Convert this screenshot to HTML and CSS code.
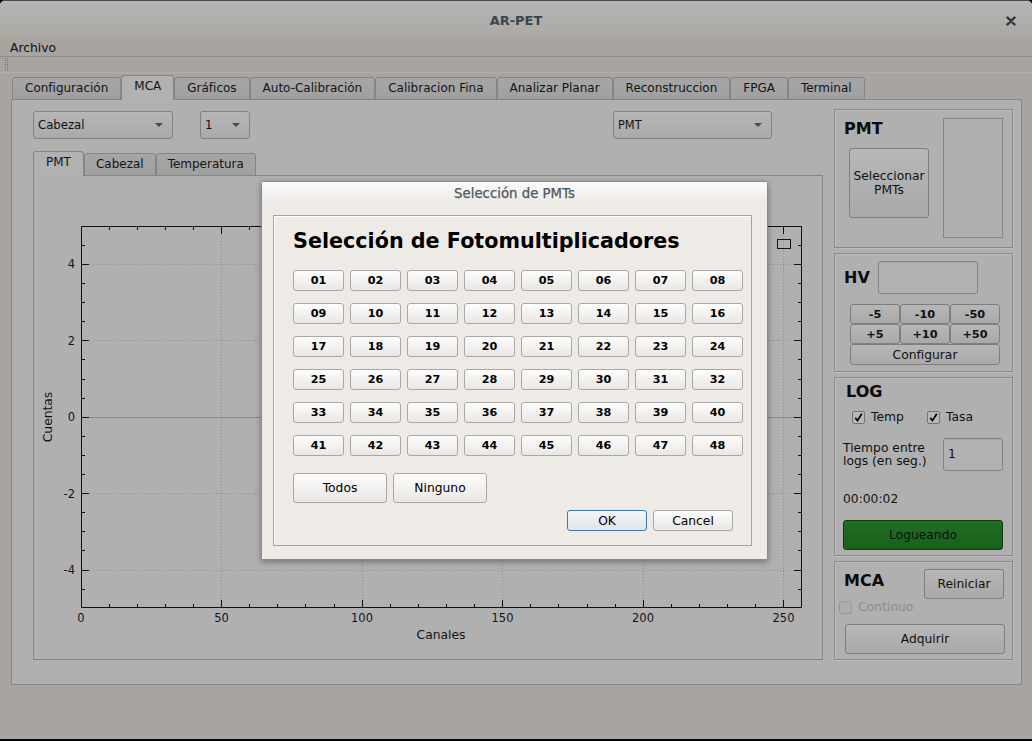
FILE: index.html
```html
<!DOCTYPE html>
<html lang="es">
<head>
<meta charset="utf-8">
<title>AR-PET</title>
<link rel="stylesheet" href="styles.css">
</head>
<body>
<div class="window">
  <header class="titlebar">
    <span></span>
    <span class="title">AR-PET</span>
    <svg class="close" width="10" height="10" viewBox="0 0 10 10"><path d="M1.5 1.5 L8.5 8.5 M8.5 1.5 L1.5 8.5" stroke="#2f3436" stroke-width="2.4" stroke-linecap="round"/></svg>
  </header>
  <nav class="menubar"><span>Archivo</span></nav>
  <div class="toolbar"><span class="grip"></span></div>
  <main class="central">
    <div class="tabbar">
      <div class="tab">Configuración</div>
      <div class="tab active">MCA</div>
      <div class="tab">Gráficos</div>
      <div class="tab">Auto-Calibración</div>
      <div class="tab">Calibracion Fina</div>
      <div class="tab">Analizar Planar</div>
      <div class="tab">Reconstruccion</div>
      <div class="tab">FPGA</div>
      <div class="tab">Terminal</div>
    </div>
    <div class="tabpane">
      <section class="leftcol">
        <div class="combos">
          <div class="combo c-cabezal"><span>Cabezal</span><i class="arrow"></i></div>
          <div class="combo c-num"><span>1</span><i class="arrow"></i></div>
          <div class="combo c-pmt"><span>PMT</span><i class="arrow"></i></div>
        </div>
        <div class="tabbar subtabs">
          <div class="tab active">PMT</div>
          <div class="tab">Cabezal</div>
          <div class="tab">Temperatura</div>
        </div>
        <div class="subpane">
          <svg class="plot" width="788" height="483" viewBox="0 0 788 483">
            <g stroke="#8e8e8e" stroke-width="1" stroke-dasharray="1 2" shape-rendering="crispEdges">
              <path d="M47 88.5H768 M47 164.5H768 M47 317.5H768 M47 394.5H768"/>
              <path d="M187.5 50V432 M328.5 50V432 M468.5 50V432 M609.5 50V432 M749.5 50V432"/>
            </g>
            <path d="M47 241.5H768" stroke="#8a8a8a" stroke-width="1" shape-rendering="crispEdges"/>
            <g stroke="#111" stroke-width="1" fill="none" shape-rendering="crispEdges">
              <rect x="47.5" y="50.5" width="720" height="381"/>
              <path d="M47.5 432V424 M75.5 432V428 M103.5 432V428 M131.5 432V428 M159.5 432V428 M187.5 432V424 M215.5 432V428 M243.5 432V428 M271.5 432V428 M300.5 432V428 M328.5 432V424 M356.5 432V428 M384.5 432V428 M412.5 432V428 M440.5 432V428 M468.5 432V424 M496.5 432V428 M524.5 432V428 M553.5 432V428 M581.5 432V428 M609.5 432V424 M637.5 432V428 M665.5 432V428 M693.5 432V428 M721.5 432V428 M749.5 432V424"/>
              <path d="M47.5 50V58 M75.5 50V54 M103.5 50V54 M131.5 50V54 M159.5 50V54 M187.5 50V58 M215.5 50V54 M243.5 50V54 M271.5 50V54 M300.5 50V54 M328.5 50V58 M356.5 50V54 M384.5 50V54 M412.5 50V54 M440.5 50V54 M468.5 50V58 M496.5 50V54 M524.5 50V54 M553.5 50V54 M581.5 50V54 M609.5 50V58 M637.5 50V54 M665.5 50V54 M693.5 50V54 M721.5 50V54 M749.5 50V58"/>
              <path d="M47 69.5H51 M47 88.5H55 M47 107.5H51 M47 126.5H51 M47 145.5H51 M47 164.5H55 M47 183.5H51 M47 203.5H51 M47 222.5H51 M47 241.5H55 M47 260.5H51 M47 279.5H51 M47 298.5H51 M47 317.5H55 M47 336.5H51 M47 355.5H51 M47 374.5H51 M47 394.5H55 M47 413.5H51"/>
              <path d="M768 69.5H764 M768 88.5H760 M768 107.5H764 M768 126.5H764 M768 145.5H764 M768 164.5H760 M768 183.5H764 M768 203.5H764 M768 222.5H764 M768 241.5H760 M768 260.5H764 M768 279.5H764 M768 298.5H764 M768 317.5H760 M768 336.5H764 M768 355.5H764 M768 374.5H764 M768 394.5H760 M768 413.5H764"/>
              <rect x="743.5" y="63.5" width="13" height="9"/>
            </g>
            <g class="ticklabel" text-anchor="end">
              <text x="41" y="92">4</text>
              <text x="41" y="168.5">2</text>
              <text x="41" y="245">0</text>
              <text x="41" y="321.5">-2</text>
              <text x="41" y="398">-4</text>
            </g>
            <g class="ticklabel" text-anchor="middle">
              <text x="47" y="445.5">0</text>
              <text x="187.5" y="445.5">50</text>
              <text x="328" y="445.5">100</text>
              <text x="468.5" y="445.5">150</text>
              <text x="609" y="445.5">200</text>
              <text x="749.5" y="445.5">250</text>
            </g>
            <text class="axistitle" x="407" y="462.5" text-anchor="middle">Canales</text>
            <text class="axistitle" transform="translate(17.5 241) rotate(-90)" text-anchor="middle">Cuentas</text>
          </svg>
        </div>
      </section>
      <aside class="rightcol">
        <div class="group g-pmt">
          <div class="pmt-left">
            <div class="gtitle">PMT</div>
            <div class="btn sel-btn">Seleccionar<br>PMTs</div>
          </div>
          <div class="pmt-box"></div>
        </div>
        <div class="group g-hv">
          <div class="hv-row">
            <div class="gtitle hv-title">HV</div>
            <div class="field hv-field"></div>
          </div>
          <div class="hv-grid">
            <div class="btn hvb">-5</div>
            <div class="btn hvb">-10</div>
            <div class="btn hvb">-50</div>
            <div class="btn hvb">+5</div>
            <div class="btn hvb">+10</div>
            <div class="btn hvb">+50</div>
            <div class="btn hv-conf">Configurar</div>
          </div>
        </div>
        <div class="group g-log">
          <div class="gtitle log-title">LOG</div>
          <div class="cb-row">
            <label class="cb cb-temp"><span class="box"><svg width="9" height="9" viewBox="0 0 9 9"><path d="M1.3 4.8 L3.4 7.6 L7.8 0.8" fill="none" stroke="#000" stroke-width="1.7"/></svg></span>Temp</label>
            <label class="cb"><span class="box"><svg width="9" height="9" viewBox="0 0 9 9"><path d="M1.3 4.8 L3.4 7.6 L7.8 0.8" fill="none" stroke="#000" stroke-width="1.7"/></svg></span>Tasa</label>
          </div>
          <div class="time-row">
            <div class="time-label">Tiempo entre<br>logs (en seg.)</div>
            <div class="field time-field">1</div>
          </div>
          <div class="clock">00:00:02</div>
          <div class="btn green">Logueando</div>
        </div>
        <div class="group g-mca">
          <div class="mca-row">
            <div class="gtitle mca-title">MCA</div>
            <div class="btn reini">Reiniciar</div>
          </div>
          <label class="cb disabled"><span class="box"></span>Continuo</label>
          <div class="btn adq">Adquirir</div>
        </div>
      </aside>
    </div>
  </main>
</div>

<div class="dialog">
  <div class="dtitle">Selección de PMTs</div>
  <div class="dbody">
    <div class="dframe">
      <h1 class="dhead">Selección de Fotomultiplicadores</h1>
      <div class="pmtgrid">
        <div class="dbtn num">01</div><div class="dbtn num">02</div><div class="dbtn num">03</div><div class="dbtn num">04</div><div class="dbtn num">05</div><div class="dbtn num">06</div><div class="dbtn num">07</div><div class="dbtn num">08</div>
        <div class="dbtn num">09</div><div class="dbtn num">10</div><div class="dbtn num">11</div><div class="dbtn num">12</div><div class="dbtn num">13</div><div class="dbtn num">14</div><div class="dbtn num">15</div><div class="dbtn num">16</div>
        <div class="dbtn num">17</div><div class="dbtn num">18</div><div class="dbtn num">19</div><div class="dbtn num">20</div><div class="dbtn num">21</div><div class="dbtn num">22</div><div class="dbtn num">23</div><div class="dbtn num">24</div>
        <div class="dbtn num">25</div><div class="dbtn num">26</div><div class="dbtn num">27</div><div class="dbtn num">28</div><div class="dbtn num">29</div><div class="dbtn num">30</div><div class="dbtn num">31</div><div class="dbtn num">32</div>
        <div class="dbtn num">33</div><div class="dbtn num">34</div><div class="dbtn num">35</div><div class="dbtn num">36</div><div class="dbtn num">37</div><div class="dbtn num">38</div><div class="dbtn num">39</div><div class="dbtn num">40</div>
        <div class="dbtn num">41</div><div class="dbtn num">42</div><div class="dbtn num">43</div><div class="dbtn num">44</div><div class="dbtn num">45</div><div class="dbtn num">46</div><div class="dbtn num">47</div><div class="dbtn num">48</div>
      </div>
      <div class="allnone">
        <div class="dbtn big">Todos</div>
        <div class="dbtn big">Ninguno</div>
      </div>
      <div class="okrow">
        <div class="dbtn act ok">OK</div>
        <div class="dbtn act">Cancel</div>
      </div>
    </div>
  </div>
</div>
</body>
</html>
```

FILE: styles.css
```css
* { box-sizing: border-box; }
html, body { margin: 0; padding: 0; }
body {
  width: 1032px;
  height: 741px;
  background: #000;
  font-family: "DejaVu Sans", "Noto Sans", sans-serif;
  font-size: 12px;
  color: #111;
  overflow: hidden;
  position: relative;
}

.window {
  height: 739px;
  background: #a8a4a0;
  border-radius: 5px 5px 0 0;
  border-top: 1px solid #4c4c4c;
  display: flex;
  flex-direction: column;
  overflow: hidden;
}

/* title bar */
.titlebar {
  height: 37px;
  flex: none;
  display: grid;
  grid-template-columns: 1fr auto 1fr;
  align-items: center;
  background: linear-gradient(#b5b5b5, #aba8a4);
  padding-top: 2px;
}
.title {
  font-weight: bold;
  font-size: 13px;
  color: #3c454d;
}
.close { justify-self: end; margin-right: 16px; }

.menubar {
  height: 19px;
  flex: none;
  line-height: 18px;
  padding: 1px 0 0 10px;
  font-size: 12.3px;
  border-bottom: 1px solid #918e8b;
}
.toolbar {
  height: 16px;
  flex: none;
  border-bottom: 1px solid #b0adaa;
  padding: 1px 0 0 5px;
}
.grip {
  display: block;
  width: 3px;
  height: 13px;
  border-left: 1px dotted #7c7a78;
  border-right: 1px dotted #7c7a78;
}

/* central area */
.central {
  flex: none;
  padding: 2px 10px 0 11px;
}

.tabbar {
  display: flex;
  align-items: flex-end;
  height: 25px;
  position: relative;
  z-index: 1;
  margin-bottom: -1px;
  padding-left: 1px;
}
.tab {
  height: 23px;
  line-height: 21px;
  padding: 0 12px;
  border: 1px solid #858585;
  border-radius: 3px 3px 0 0;
  background: linear-gradient(#a6a6a6, #a0a0a0);
  color: #141414;
  white-space: nowrap;
}
.tab.active {
  height: 25px;
  line-height: 21px;
  border-bottom: none;
  background: #b1b1b1;
  padding-bottom: 2px;
}

.tabpane {
  width: 1011px;
  height: 586px;
  border: 1px solid #878787;
  background: #b0b0b0;
  display: flex;
  gap: 11px;
  padding: 9px 8px 0 21px;
}

/* left column */
.leftcol {
  width: 790px;
  margin-top: 2px;
  display: flex;
  flex-direction: column;
}
.combos {
  display: flex;
  height: 28px;
  margin-bottom: 12px;
}
.combo {
  height: 28px;
  border: 1px solid #838383;
  border-radius: 3px;
  background: linear-gradient(#b6b6b6, #aaaaaa);
  display: flex;
  align-items: center;
  justify-content: space-between;
  padding: 0 9px 0 4px;
  font-size: 11.7px;
}
.c-cabezal { width: 140px; }
.c-num { width: 50px; margin-left: 27px; }
.c-pmt { width: 159px; margin-left: 363px; font-size: 11.4px; }
.arrow {
  width: 0; height: 0;
  border-left: 4px solid transparent;
  border-right: 4px solid transparent;
  border-top: 4px solid #4a4a4a;
}
.subtabs { padding-left: 0; }
.subtabs .tab { padding: 0 11px; }
.subtabs .tab.active { padding: 0 12px 2px; }

.subpane {
  height: 485px;
  border: 1px solid #878787;
  background: #b0b0b0;
}
.plot { display: block; }
.ticklabel text { font-family: "DejaVu Sans", sans-serif; font-size: 11.5px; fill: #141414; }
.axistitle { font-family: "DejaVu Sans", sans-serif; font-size: 12.3px; fill: #141414; }

/* right column */
.rightcol {
  width: 179px;
  display: flex;
  flex-direction: column;
  gap: 5px;
}
.group {
  border: 1px solid #8a8a8a;
  box-shadow: inset 1px 1px 0 #bcbcbc, 1px 1px 0 #bcbcbc;
}
.gtitle {
  font-weight: bold;
  font-size: 16px;
  line-height: 22px;
  color: #0c0c0c;
}
.btn {
  border: 1px solid #7f7f7f;
  border-radius: 3px;
  background: linear-gradient(#b7b7b7, #a9a9a9);
  display: flex;
  align-items: center;
  justify-content: center;
  text-align: center;
  color: #111;
  font-size: 12.3px;
}

.g-pmt {
  height: 139px;
  display: flex;
  justify-content: space-between;
  padding: 8px 9px 9px 9px;
}
.sel-btn {
  width: 80px;
  height: 70px;
  margin: 8px 0 0 5px;
  line-height: 14px;
}
.pmt-box {
  width: 60px;
  height: 120px;
  border: 1px solid #868686;
  background: #b0b0b0;
}

.g-hv {
  height: 119px;
  padding: 7px 9px 0 9px;
}
.hv-row { display: flex; align-items: center; }
.hv-title { width: 34px; padding-top: 1px; }
.field {
  border: 1px solid #828282;
  border-radius: 3px;
  background: #b2b2b2;
  box-shadow: inset 0 1px 0 #a9a9a9;
}
.hv-field { width: 100px; height: 33px; }
.hv-grid {
  display: grid;
  grid-template-columns: 50px 50px 50px;
  grid-template-rows: 20px 20px 21px;
  margin: 10px 0 0 6px;
  width: 151px;
}
.hvb { font-weight: bold; font-size: 11.3px; }
.hv-conf { grid-column: 1 / 4; }

.g-log {
  height: 179px;
  padding: 3px 9px 0 8px;
  display: flex;
  flex-direction: column;
  font-size: 12.3px;
}
.log-title { margin-left: 3px; }
.cb-row { display: flex; margin: 6px 0 0 9px; height: 16px; }
.cb {
  display: flex;
  align-items: center;
  gap: 6px;
  line-height: 16px;
  font-size: 12.3px;
}
.cb-temp { width: 75px; }
.cb .box {
  width: 13px;
  height: 13px;
  border: 1px solid #747474;
  border-radius: 2px;
  background: #b9b9b9;
  display: flex;
  align-items: center;
  justify-content: center;
}
.time-row {
  display: flex;
  align-items: center;
  margin-top: 13px;
}
.time-label { width: 100px; line-height: 13px; }
.time-field {
  width: 60px;
  height: 33px;
  line-height: 31px;
  padding-left: 4px;
}
.clock { margin-top: 20px; line-height: 16px; }
.green {
  margin-top: 13px;
  width: 160px;
  height: 30px;
  background: linear-gradient(#1f6e23, #19611c);
  border-color: #0e3a10;
  color: #0b120b;
}

.g-mca {
  height: 99px;
  padding: 7px 8px 0 9px;
  display: flex;
  flex-direction: column;
}
.mca-row { display: flex; justify-content: space-between; align-items: flex-start; }
.mca-title { margin-top: 1px; }
.reini { width: 80px; height: 30px; }
.cb.disabled { margin-left: -5px; color: #8c8c8c; height: 16px; }
.cb.disabled .box { border-color: #999; background: #adadad; }
.adq { margin: 9px 0 0 1px; width: 160px; height: 30px; }

/* dialog */
.dialog {
  position: absolute;
  left: 261px;
  top: 181px;
  width: 507px;
  height: 379px;
  background: #eeebe7;
  border: 1px solid #8a8a8a;
  border-radius: 3px 3px 0 0;
  box-shadow: 0 2px 6px rgba(0,0,0,0.35);
}
.dtitle {
  height: 24px;
  line-height: 24px;
  text-align: center;
  font-size: 13.3px;
  color: #4d5861;
  background: linear-gradient(#fbfbfb, #ebe8e4);
  -webkit-text-stroke: 0.25px #4d5861;
}
.dbody { padding: 9px 15px 0 11px; }
.dframe {
  height: 331px;
  border: 1px solid #a6a4a0;
  box-shadow: inset 1px 1px 0 #ffffff;
  padding: 12px 18px 0 19px;
}
.dhead {
  margin: 0;
  font-size: 20.7px;
  line-height: 26px;
  font-weight: bold;
  color: #000;
}
.pmtgrid {
  margin-top: 16px;
  display: grid;
  grid-template-columns: repeat(8, 51px);
  grid-auto-rows: 21px;
  column-gap: 6px;
  row-gap: 12.1px;
}
.dbtn {
  border: 1px solid #aaa8a5;
  border-radius: 3px;
  background: linear-gradient(#fdfdfd, #e9e7e4);
  display: flex;
  align-items: center;
  justify-content: center;
  color: #000;
  font-size: 12.3px;
}
.num { font-weight: bold; font-size: 11.2px; }
.allnone { display: flex; gap: 6px; margin-top: 17px; }
.big { width: 94px; height: 30px; }
.okrow { display: flex; justify-content: flex-end; gap: 6px; margin-top: 7px; }
.act { width: 80px; height: 21px; }
.ok {
  border-color: #3f78ab;
  background: linear-gradient(#f4f6f8, #dfe5ea);
}
```
